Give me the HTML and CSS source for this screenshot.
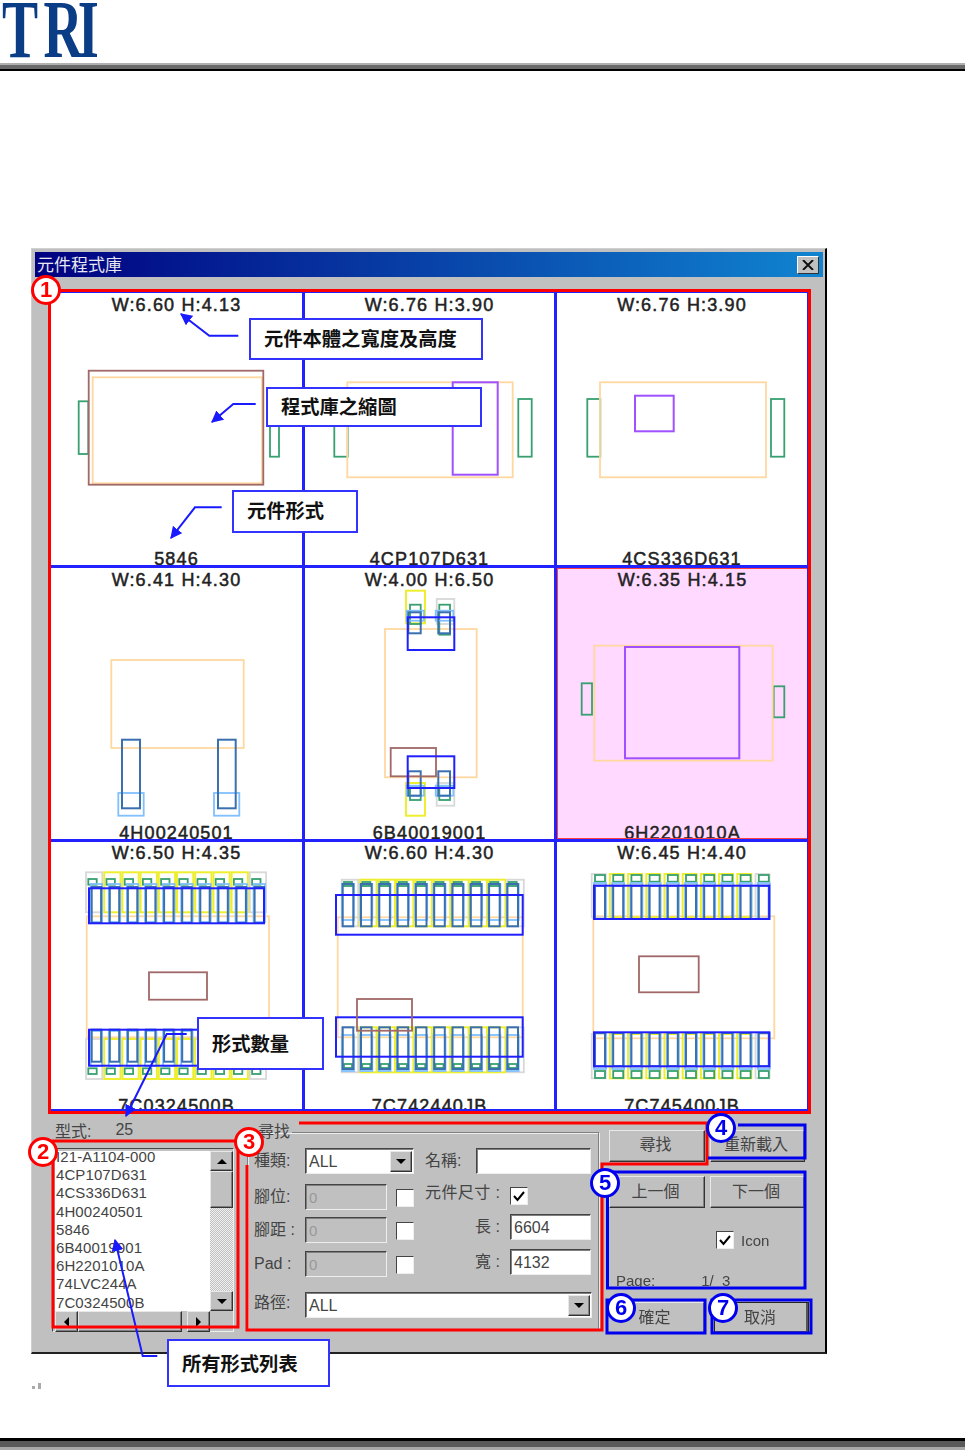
FILE: index.html
```html
<!DOCTYPE html>
<html lang="zh-Hant">
<head>
    <meta charset="UTF-8">
    <meta name="viewport" content="width=device-width, initial-scale=1.0">
    <title>元件程式庫</title>
    <link rel="stylesheet" href="styles.css">
</head>
<body>
<div class="page">
    <header class="page-head">
        <div class="logo"><span class="logo-text"><span class="logo-t">T</span><span class="logo-r">R</span>I</span></div>
        <div class="rule rule-top"></div>
    </header>

    <main class="dialog">
        <div class="title-bar">
            <span>元件程式庫</span>
            <span class="close-btn">
                <svg viewBox="0 0 12 10" width="12" height="10"><path d="M1 0 L11 10 M11 0 L1 10"></path></svg>
            </span>
        </div>

        <section class="parts">
            <div class="cell">
                <svg class="art" viewBox="51 294 251 272">
                    <rect class="green" x="78.7" y="402.3" width="9.6" height="52.7"></rect>
                    <rect class="green" x="270" y="402" width="9" height="55.7"></rect>
                    <rect class="orange" x="92.7" y="378.3" width="169.3" height="106"></rect>
                    <rect class="brown" x="88.7" y="371.7" width="174.6" height="114"></rect>
                </svg>
                <p class="size">W:6.60 H:4.13</p>
                <p class="name">5846</p>
            </div>
            <div class="cell">
                <svg class="art" viewBox="305 294 249 272">
                    <rect class="green" x="334.3" y="402" width="13.4" height="55.7"></rect>
                    <rect class="green" x="518.3" y="400" width="13.4" height="57.7"></rect>
                    <rect class="orange" x="347.3" y="383.3" width="165.4" height="95"></rect>
                    <rect class="purple" x="452.7" y="383.3" width="45" height="92.4"></rect>
                </svg>
                <p class="size">W:6.76 H:3.90</p>
                <p class="name">4CP107D631</p>
            </div>
            <div class="cell">
                <svg class="art" viewBox="557 294 250 272">
                    <rect class="green" x="587.3" y="400" width="13" height="57.7"></rect>
                    <rect class="green" x="771" y="400" width="13.3" height="57.7"></rect>
                    <rect class="orange" x="600" y="383.3" width="166" height="95"></rect>
                    <rect class="purple" x="635" y="396.7" width="38.7" height="35.6"></rect>
                </svg>
                <p class="size">W:6.76 H:3.90</p>
                <p class="name">4CS336D631</p>
            </div>

            <div class="cell">
                <svg class="art" viewBox="51 569 251 271">
                    <rect class="orange" x="111.3" y="661" width="132.4" height="88"></rect>
                    <rect class="sky" x="118.3" y="794" width="25.4" height="22.7"></rect>
                    <rect class="sky" x="214" y="794" width="25.3" height="22.7"></rect>
                    <rect class="steel" x="122" y="740.7" width="18" height="68.6"></rect>
                    <rect class="steel" x="218" y="740.7" width="17.7" height="68.6"></rect>
                </svg>
                <p class="size">W:6.41 H:4.30</p>
                <p class="name">4H00240501</p>
            </div>
            <div class="cell">
                <svg class="art" viewBox="305 569 249 271">
                    <rect class="orange" x="385" y="630" width="91.7" height="148.3"></rect>
                    <rect class="yellow" x="406" y="591.7" width="19" height="32.6"></rect>
                    <rect class="gray" x="436.7" y="600" width="17.6" height="25"></rect>
                    <rect class="green" x="410" y="605.7" width="10.7" height="19.3"></rect>
                    <rect class="green" x="439.3" y="605.7" width="10.7" height="30"></rect>
                    <rect class="sky" x="406.7" y="611.7" width="17.3" height="10"></rect>
                    <rect class="sky" x="435.7" y="611.7" width="17.6" height="10"></rect>
                    <rect class="steel" x="408.3" y="613.3" width="12.4" height="21"></rect>
                    <rect class="steel" x="438.3" y="613.3" width="11.7" height="21"></rect>
                    <rect class="blue" x="407.7" y="618.3" width="46.6" height="32.7"></rect>
                    <rect class="yellow" x="406" y="784" width="19" height="32.7"></rect>
                    <rect class="gray" x="436.7" y="784" width="17.6" height="22.7"></rect>
                    <rect class="green" x="410" y="788.3" width="10.7" height="12.7"></rect>
                    <rect class="green" x="439.3" y="788.3" width="10.7" height="12.7"></rect>
                    <rect class="sky" x="406.7" y="786.7" width="17.3" height="10"></rect>
                    <rect class="sky" x="435.7" y="786.7" width="17.6" height="10"></rect>
                    <rect class="steel" x="408.3" y="772.3" width="12.4" height="24.4"></rect>
                    <rect class="steel" x="438.3" y="772.3" width="11.7" height="24.4"></rect>
                    <rect class="brown" x="390.7" y="749" width="45.3" height="28.3"></rect>
                    <rect class="blue" x="407.7" y="757.3" width="46.6" height="31.7"></rect>
                </svg>
                <p class="size">W:4.00 H:6.50</p>
                <p class="name">6B40019001</p>
            </div>
            <div class="cell cell-picked">
                <svg class="art" viewBox="557 569 250 271">
                    <rect class="green" x="581.7" y="684.3" width="10.3" height="31.4"></rect>
                    <rect class="green" x="773.7" y="687.3" width="10.6" height="31"></rect>
                    <rect class="orange" x="594.3" y="646.7" width="178.4" height="115"></rect>
                    <rect class="purple" x="625" y="648" width="114.3" height="111.3"></rect>
                </svg>
                <p class="size">W:6.35 H:4.15</p>
                <p class="name">6H2201010A</p>
            </div>

            <div class="cell cell-last">
                <svg class="art" id="art-7" viewBox="51 843 251 267"></svg>
                <p class="size">W:6.50 H:4.35</p>
                <p class="name">7C0324500B</p>
            </div>
            <div class="cell cell-last">
                <svg class="art" id="art-8" viewBox="305 843 249 267"></svg>
                <p class="size">W:6.60 H:4.30</p>
                <p class="name">7C742440JB</p>
            </div>
            <div class="cell cell-last">
                <svg class="art" id="art-9" viewBox="557 843 250 267"></svg>
                <p class="size">W:6.45 H:4.40</p>
                <p class="name">7C745400JB</p>
            </div>
        </section>

        <section class="panel">
            <div class="list-col">
                <div class="count"><span>型式:</span><span>25</span></div>
                <div class="list-box">
                    <ul class="list-items">
                        <li>I21-A1104-000</li>
                        <li>4CP107D631</li>
                        <li>4CS336D631</li>
                        <li>4H00240501</li>
                        <li>5846</li>
                        <li>6B40019001</li>
                        <li>6H2201010A</li>
                        <li>74LVC244A</li>
                        <li>7C0324500B</li>
                    </ul>
                    <div class="vscroll">
                        <span class="btn sb-btn"><i class="tri tri-up"></i></span>
                        <span class="btn sb-thumb"></span>
                        <span class="sb-track"></span>
                        <span class="btn sb-btn"><i class="tri tri-down"></i></span>
                    </div>
                    <div class="hscroll">
                        <span class="btn sb-btn"><i class="tri tri-left"></i></span>
                        <span class="btn sb-thumb"></span>
                        <span class="sb-track"></span>
                        <span class="btn sb-btn"><i class="tri tri-right"></i></span>
                    </div>
                </div>
            </div>

            <fieldset class="search">
                <legend>尋找</legend>
                <div class="search-top">
                    <div class="search-left">
                        <div class="row row-kind">
                            <label>種類:</label>
                            <div class="field combo combo-kind"><span>ALL</span><span class="btn drop"><i class="tri tri-down"></i></span></div>
                        </div>
                        <div class="row row-pin">
                            <label>腳位:</label>
                            <div class="field off">0</div>
                            <span class="check"></span>
                        </div>
                        <div class="row row-pitch">
                            <label>腳距 :</label>
                            <div class="field off">0</div>
                            <span class="check"></span>
                        </div>
                        <div class="row">
                            <label>Pad :</label>
                            <div class="field off">0</div>
                            <span class="check"></span>
                        </div>
                    </div>
                    <div class="search-right">
                        <div class="row row-name">
                            <label class="lb-name">名稱:</label>
                            <div class="field field-name"></div>
                        </div>
                        <div class="row row-size">
                            <label class="lb-size">元件尺寸 :</label>
                            <span class="check"><svg viewBox="0 0 12 12" width="12" height="12"><path d="M1 6 L4.5 10 L11 2"></path></svg></span>
                        </div>
                        <div class="row row-len">
                            <label class="lb-size lb-end">長 :</label>
                            <div class="field field-num">6604</div>
                        </div>
                        <div class="row">
                            <label class="lb-size lb-end">寬 :</label>
                            <div class="field field-num">4132</div>
                        </div>
                    </div>
                </div>
                <div class="row row-path">
                    <label>路徑:</label>
                    <div class="field combo combo-path"><span>ALL</span><span class="btn drop"><i class="tri tri-down"></i></span></div>
                </div>
            </fieldset>

            <div class="actions">
                <div class="btn-row btn-row-top">
                    <button class="btn cmd" type="button">尋找</button>
                    <button class="btn cmd" type="button">重新載入</button>
                </div>
                <div class="btn-row btn-row-pages">
                    <button class="btn cmd" type="button">上一個</button>
                    <button class="btn cmd" type="button">下一個</button>
                </div>
                <div class="icon-row">
                    <span class="check"><svg viewBox="0 0 12 12" width="12" height="12"><path d="M1 6 L4.5 10 L11 2"></path></svg></span>
                    <span>Icon</span>
                </div>
                <div class="page-row"><span>Page:</span><span>1/&nbsp;&nbsp;3</span></div>
                <div class="btn-row btn-row-end">
                    <button class="btn cmd" type="button">確定</button>
                    <button class="btn cmd cmd-default" type="button">取消</button>
                </div>
            </div>
        </section>
    </main>

    <div class="ticks"><i class="tick-s"></i><i class="tick-l"></i></div>

    <footer class="rule rule-bottom"></footer>

    <!-- markup drawn on top of the screenshot -->
    <svg class="marks" viewBox="0 0 965 1450">
        <defs>
            <marker id="head" viewBox="0 0 10 10" refX="9" refY="5" markerWidth="6" markerHeight="6" orient="auto-start-reverse">
                <path class="head" d="M0 0 L10 5 L0 10 Z"></path>
            </marker>
        </defs>
        <polyline class="arrow" points="238.3,335.7 209.3,335.7 181,314"></polyline>
        <polyline class="arrow" points="255.7,404 233.3,404 212,422"></polyline>
        <polyline class="arrow" points="221.7,507.3 195,507.3 171,538"></polyline>
        <polyline class="arrow" points="186.7,1034 166.7,1034 126,1116"></polyline>
        <polyline class="arrow" points="157.3,1356 142.7,1356 115,1240"></polyline>
        <rect class="box-red" x="53" y="1141" width="185" height="186"></rect>
        <polyline class="box-red" points="247,1165 247,1330 602,1330 602,1164 707,1164 707,1123 299,1123"></polyline>
        <polyline class="box-blue" points="738,1125 805,1125 805,1158 708,1158"></polyline>
        <rect class="box-blue" x="607.5" y="1172" width="197.5" height="116"></rect>
        <rect class="box-blue" x="607" y="1300" width="98" height="33"></rect>
        <rect class="box-blue" x="712" y="1300" width="99" height="33"></rect>
    </svg>

    <div class="note note-1">元件本體之寬度及高度</div>
    <div class="note note-2">程式庫之縮圖</div>
    <div class="note note-3">元件形式</div>
    <div class="note note-4">形式數量</div>
    <div class="note note-5">所有形式列表</div>

    <span class="badge badge-red badge-1">1</span>
    <span class="badge badge-red badge-2">2</span>
    <span class="badge badge-red badge-3">3</span>
    <span class="badge badge-blue badge-4">4</span>
    <span class="badge badge-blue badge-5">5</span>
    <span class="badge badge-blue badge-6">6</span>
    <span class="badge badge-blue badge-7">7</span>
</div>
<script src="script.js"></script>
</body>
</html>
```

FILE: styles.css
```css
* {
    box-sizing: border-box;
}

body {
    margin: 0;
    background-color: #fff;
    font-family: "Liberation Sans", "Noto Sans CJK TC", sans-serif;
    color: #333;
    overflow: hidden;
}

p, ul {
    margin: 0;
    padding: 0;
}

.page {
    position: relative;
    width: 965px;
    height: 1450px;
    display: flex;
    flex-direction: column;
    filter: blur(0.45px);
}

/* page header and footer */
.logo {
    height: 63px;
    padding-left: 2px;
}

.logo-text {
    display: block;
    transform: scaleX(0.66);
    transform-origin: left top;
    font-family: "Liberation Serif", serif;
    font-weight: bold;
    font-size: 82px;
    line-height: 60px;
    color: #0b3c86;
}

.logo-t {
    letter-spacing: 8px;
}

.logo-r {
    letter-spacing: -7px;
}

.rule {
    height: 12px;
}

.rule-top {
    height: 8px;
    background: linear-gradient(#b0b0b0 0 2px, #6a6a6a 2px 6px, #000 6px);
}

.rule-bottom {
    margin-top: auto;
    background: linear-gradient(#000 0 3px, #5a5a5a 3px 9px, #a8a8a8 9px);
}

/* dialog */
.dialog {
    width: 796px;
    height: 1106px;
    margin: 177px 0 0 31px;
    padding: 3px 2px 0 3px;
    background-color: #c0c0c0;
    border-style: solid;
    border-width: 1px 2px 2px 1px;
    border-color: #d0d0d0 #000 #222 #d0d0d0;
}

.title-bar {
    height: 25px;
    display: flex;
    justify-content: space-between;
    align-items: center;
    padding: 0 4px 2px 2px;
    background: linear-gradient(to right, #000080, #1084d0);
    color: #e8e8f0;
    font-size: 17px;
}

.close-btn {
    width: 22px;
    height: 18px;
    margin-top: 2px;
    display: flex;
    align-items: center;
    justify-content: center;
    background-color: #c0c0c0;
    border: 1px solid;
    border-color: #fff #333 #333 #fff;
}

.close-btn path {
    stroke: #111;
    stroke-width: 2;
    fill: none;
}

/* thumbnails */
.parts {
    width: 763px;
    height: 825px;
    margin: 12px 0 0 13px;
    padding: 1px 1px 0 0;
    display: grid;
    grid-template-columns: 251px 249px 250px;
    grid-template-rows: 272px 271px 267px;
    gap: 3px;
    background-color: #2222ff;
    border: 3px solid #f00;
}

.cell {
    position: relative;
    overflow: hidden;
    display: flex;
    flex-direction: column;
    justify-content: space-between;
    align-items: center;
    background-color: #fff;
    font-size: 18px;
    line-height: 18px;
    letter-spacing: 1.15px;
    color: #222;
    -webkit-text-stroke: 0.5px #222;
}

.cell-picked {
    background-color: #ffd9ff;
    border: solid #ff4040;
    border-width: 1px 0 1px 1px;
}

.art {
    position: absolute;
    inset: 0;
    width: 100%;
    height: 100%;
}

.art rect {
    fill: none;
    stroke-width: 1.8;
}

.cell-picked .art {
    inset: -1px 0 -1px -1px;
    height: 271px;
    width: 250px;
}

.size {
    position: relative;
    padding-top: 3px;
}

.name {
    position: relative;
    margin-bottom: -3px;
}

.cell-picked .size,
.cell-last .size {
    padding-top: 2px;
}

.cell-picked .name {
    margin-bottom: -4px;
}

.cell-last .name {
    margin-bottom: -6px;
}

.orange { stroke: #ffd8a0; }
.brown { stroke: #a06868; }
.green { stroke: #38a070; }
.purple { stroke: #a050ff; stroke-width: 2 !important; }
.blue { stroke: #2020ff; stroke-width: 2 !important; }
.steel { stroke: #3a70b0; stroke-width: 2 !important; }
.sky { stroke: #80c0ff; }
.yellow { stroke: #eeee30; stroke-width: 2 !important; }
.gray { stroke: #d8d8d8; }

/* lower part of the dialog */
.panel {
    display: flex;
    margin-left: 17px;
    font-size: 16px;
}

.list-col {
    width: 182px;
}

.count {
    height: 34px;
    display: flex;
    align-items: center;
    gap: 24px;
    padding: 0 0 2px 3px;
    color: #444;
}

.list-box {
    width: 182px;
    height: 184px;
    display: grid;
    grid-template-columns: 1fr 23px;
    grid-template-rows: 1fr 21px;
    padding: 2px 0 0 2px;
    background-color: #c0c0c0;
    border: 1px solid;
    border-color: #444 #eee #eee #444;
}

.list-items {
    list-style: none;
    height: 160px;
    padding-left: 1px;
    background-color: #fff;
    overflow: hidden;
    font-size: 15px;
    letter-spacing: 0.1px;
    line-height: 18.2px;
    color: #444;
}

.list-items li:first-child {
    margin-top: -3px;
}

.vscroll, .hscroll {
    display: flex;
}

.vscroll {
    flex-direction: column;
}

.btn {
    background-color: #c0c0c0;
    border: 1px solid;
    border-color: #e8e8e8 #333 #333 #e8e8e8;
    box-shadow: inset -1px -1px #808080;
}

.sb-btn {
    flex: 0 0 20px;
    display: flex;
    align-items: center;
    justify-content: center;
}

.sb-thumb {
    flex: 0 0 37px;
}

.hscroll .sb-btn {
    flex-basis: 23px;
}

.hscroll .sb-thumb {
    flex-basis: 104px;
}

.sb-track {
    flex: 1;
    background: repeating-conic-gradient(#c0c0c0 0 25%, #f0f0f0 0 50%) 0 0 / 2px 2px;
}

.hscroll .sb-track {
    background: #c0c0c0;
}

.tri {
    width: 0;
    height: 0;
    border: 5px solid transparent;
}

.tri-up { border-bottom-color: #000; border-top-width: 0; }
.tri-down { border-top-color: #000; border-bottom-width: 0; }
.tri-left { border-right-color: #000; border-left-width: 0; }
.tri-right { border-left-color: #000; border-right-width: 0; }

/* search group */
.search {
    width: 351px;
    height: 207px;
    margin: 9px 0 0 13px;
    padding: 7px 6px 0;
    border: 1px solid #808080;
    box-shadow: 1px 1px #eee, inset 1px 1px #eee;
    color: #444;
}

.search legend {
    padding: 0 2px;
    margin-left: 2px;
    line-height: 18px;
    font-size: 16px;
}

.search-top {
    display: flex;
    gap: 11px;
}

.search-left {
    width: 160px;
}

.search-right {
    width: 166px;
}

.row {
    display: flex;
    align-items: flex-start;
}

.row label {
    flex: 0 0 51px;
    line-height: 26px;
}

.row-kind { height: 36px; }
.row-pin { height: 33px; }
.row-pitch { height: 34px; }
.row-name { height: 39px; }
.row-size { height: 27px; }
.row-len { height: 35px; }

.row-path {
    margin-top: 15px;
}

.row-path label {
    line-height: 22px;
}

.field {
    height: 26px;
    padding: 2px 0 0 3px;
    background-color: #fff;
    border: 1px solid;
    border-color: #444 #eee #eee #444;
    box-shadow: inset 1px 1px #808080;
    line-height: 22px;
}

.off {
    width: 82px;
    background-color: #c0c0c0;
    color: #999;
    font-size: 15px;
}

.combo {
    display: flex;
    justify-content: space-between;
    padding: 2px 1px 1px 3px;
}

.combo-kind {
    width: 111px;
}

.combo-path {
    width: 287px;
}

.drop {
    width: 22px;
    display: flex;
    align-items: center;
    justify-content: center;
}

.check {
    width: 18px;
    height: 18px;
    margin: 5px 0 0 9px;
    display: flex;
    align-items: center;
    justify-content: center;
    background-color: #fff;
    border: 1px solid;
    border-color: #444 #eee #eee #444;
}

.check path {
    fill: none;
    stroke: #000;
    stroke-width: 2;
}

.row label.lb-name {
    flex-basis: 51px;
}

.field-name {
    width: 115px;
}

.row label.lb-size {
    flex-basis: 85px;
}

.row label.lb-end {
    padding-right: 10px;
    text-align: right;
}

.row-size label.lb-size {
    line-height: 12px;
    letter-spacing: 0.4px;
}

.row-size .check {
    margin: 0;
}

.field-num {
    width: 81px;
}

/* buttons */
.actions {
    width: 199px;
    margin: 16px 0 0 10px;
    color: #444;
}

.btn-row {
    display: grid;
    grid-template-columns: 96px 95px;
    gap: 5px;
}

.cmd {
    height: 32px;
    padding: 0 3px 4px 0;
    font: inherit;
    color: inherit;
}

.btn-row-top .cmd {
    padding-bottom: 8px;
}

.btn-row-pages {
    margin-top: 14px;
}

.icon-row {
    display: flex;
    align-items: center;
    gap: 7px;
    height: 18px;
    margin: 23px 0 0 107px;
    font-size: 15px;
}

.icon-row .check {
    margin: 0;
}

.page-row {
    display: flex;
    gap: 46px;
    height: 18px;
    margin: 23px 0 0 7px;
    font-size: 15px;
    line-height: 18px;
}

.btn-row-end {
    margin: 12px 0 0 -2px;
    grid-template-columns: 98px 95px;
    gap: 9px;
}

.cmd-default {
    border-color: #222;
    box-shadow: inset -2px -2px #555;
}

.ticks {
    display: flex;
    align-items: flex-end;
    gap: 3px;
    height: 6px;
    margin: 29px 0 0 32px;
}

.ticks i {
    display: block;
    width: 3px;
    background-color: #aaa;
}

.tick-s { height: 3px; }
.tick-l { height: 6px; }

/* markup on top of the shot */
.marks {
    position: absolute;
    inset: 0;
    width: 965px;
    height: 1450px;
}

.arrow {
    fill: none;
    stroke: #1a1aff;
    stroke-width: 2;
    marker-end: url(#head);
}

.head {
    fill: #1a1aff;
}

.box-red, .box-blue {
    fill: none;
    stroke-width: 3;
}

.box-red { stroke: #f00; }
.box-blue { stroke: #0000ee; }

.note {
    position: absolute;
    display: flex;
    align-items: center;
    padding-left: 13px;
    background-color: #fff;
    border: 2px solid #3333ff;
    font-size: 19.3px;
    font-weight: bold;
    color: #111;
}

.note-1 { left: 249px; top: 318px; width: 234px; height: 42px; padding-bottom: 3px; }
.note-2 { left: 266px; top: 387px; width: 216px; height: 40px; padding-bottom: 3px; }
.note-3 { left: 232px; top: 490px; width: 126px; height: 43px; padding-bottom: 3px; }
.note-4 { left: 197px; top: 1017px; width: 127px; height: 53px; padding-bottom: 2px; }
.note-5 { left: 167px; top: 1339px; width: 163px; height: 48px; }

.badge {
    position: absolute;
    width: 30px;
    height: 30px;
    display: flex;
    align-items: center;
    justify-content: center;
    background-color: #fff;
    border: 3px solid;
    border-radius: 50%;
    font-size: 22px;
    font-weight: bold;
}

.badge-red { border-color: #f00; color: #f00; }
.badge-blue { border-color: #0000ee; color: #0000ee; }

.badge-1 { left: 31px; top: 275px; }
.badge-2 { left: 28px; top: 1137px; }
.badge-3 { left: 234px; top: 1127px; }
.badge-4 { left: 706px; top: 1113px; }
.badge-5 { left: 590px; top: 1168px; }
.badge-6 { left: 606px; top: 1293px; }
.badge-7 { left: 708px; top: 1293px; }
```

FILE: script.js
```js
// the last row of thumbnails has long combs of pads, so they are drawn in a loop
function rect(svg, cls, x, y, w, h) {
    const r = document.createElementNS('http://www.w3.org/2000/svg', 'rect');
    r.setAttribute('class', cls);
    r.setAttribute('x', x);
    r.setAttribute('y', y);
    r.setAttribute('width', w);
    r.setAttribute('height', h);
    svg.appendChild(r);
}

function comb(svg, cls, x, pitch, w, y, h) {
    for (let i = 0; i < 10; i++) {
        rect(svg, cls, x + i * pitch, y, w, h);
    }
}

// gray pads at both ends, yellow between
function pads(svg, x, pitch, w, y, h) {
    for (let i = 0; i < 10; i++) {
        const cls = (i === 0 || i === 9) ? 'gray' : 'yellow';
        rect(svg, cls, x + i * pitch, y, w, h);
    }
}

const art7 = document.getElementById('art-7');
rect(art7, 'orange', 86.7, 917.3, 182.3, 121);
pads(art7, 86, 18.2, 16.3, 873.3, 40);
pads(art7, 86, 18.2, 16.3, 1040, 40);
comb(art7, 'green', 88.3, 18.2, 8.4, 880, 5.7);
comb(art7, 'green', 88.3, 18.2, 8.4, 1069.3, 5.7);
comb(art7, 'sky', 90.7, 18.1, 11.4, 885, 38);
comb(art7, 'sky', 90.7, 18.1, 11.4, 1032, 35);
comb(art7, 'steel', 91.7, 18.1, 9.4, 888, 36);
comb(art7, 'steel', 91.7, 18.1, 9.4, 1030.7, 32);
rect(art7, 'blue', 89, 889.3, 175, 35);
rect(art7, 'blue', 89, 1030.7, 175, 36);
rect(art7, 'brown', 149, 973.3, 58, 27.4);

const art8 = document.getElementById('art-8');
rect(art8, 'orange', 337.7, 918.3, 185, 120);
pads(art8, 341.7, 18.4, 16.5, 880.7, 46.6);
pads(art8, 341.7, 18.4, 16.5, 1028.3, 45);
comb(art8, 'green', 344, 18.3, 8, 883, 4);
comb(art8, 'green', 344, 18.3, 8, 1065, 4);
comb(art8, 'sky', 342, 18.3, 12, 885, 36);
comb(art8, 'sky', 342, 18.3, 12, 1036, 36);
comb(art8, 'steel', 342.7, 18.3, 10.6, 885, 42.3);
comb(art8, 'steel', 342.7, 18.3, 10.6, 1028.3, 41.7);
rect(art8, 'blue', 336, 896, 186.7, 39.7);
rect(art8, 'blue', 336, 1018.3, 186.7, 39.4);
rect(art8, 'brown', 357, 1000, 55, 31.7);

const art9 = document.getElementById('art-9');
rect(art9, 'orange', 593.3, 917.3, 181, 122);
pads(art9, 591.7, 18.2, 14, 875, 43.3);
pads(art9, 591.7, 18.2, 14, 1035, 44.3);
comb(art9, 'green', 595, 18.2, 10, 876, 6.7);
comb(art9, 'green', 595, 18.2, 10, 1072, 7);
comb(art9, 'sky', 594, 18.2, 12, 884, 36);
comb(art9, 'sky', 594, 18.2, 12, 1034, 36);
comb(art9, 'steel', 595, 18.2, 10, 886.7, 33.3);
comb(art9, 'steel', 595, 18.2, 10, 1034, 33.3);
rect(art9, 'blue', 594, 886.7, 175.3, 33.3);
rect(art9, 'blue', 594, 1033.3, 175.3, 34);
rect(art9, 'brown', 639, 957.3, 59.7, 36);
```
